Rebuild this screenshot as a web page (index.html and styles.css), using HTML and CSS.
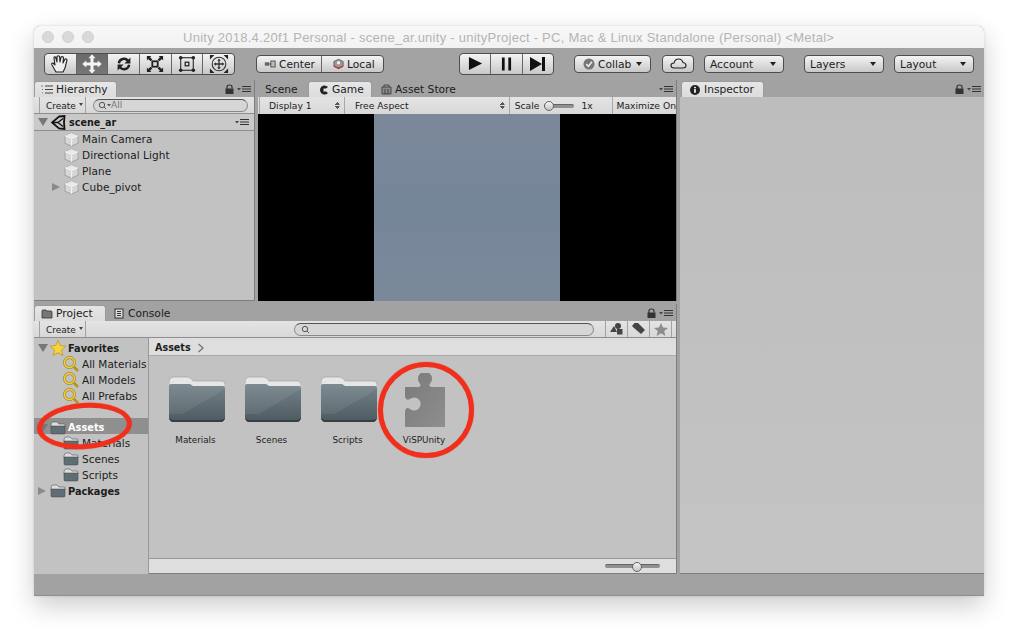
FILE: index.html
```html
<!DOCTYPE html>
<html lang="en">
<head>
<meta charset="utf-8">
<title>Unity</title>
<link rel="stylesheet" href="styles.css">
</head>
<body>
<svg class="defs" width="0" height="0" aria-hidden="true">
  <defs>
    <linearGradient id="fg" x1="0" y1="0" x2="0" y2="1"><stop offset="0" stop-color="#74838a"/><stop offset="1" stop-color="#4d5a60"/></linearGradient>
    <linearGradient id="pg" x1="0" y1="0" x2="1" y2="1"><stop offset="0" stop-color="#7a7a7a"/><stop offset="1" stop-color="#8e8e8e"/></linearGradient>
    <symbol id="folder" viewBox="0 0 56 46" preserveAspectRatio="none">
      <path d="M0 7Q0 1 5 1H18Q22 1 24 5H53Q56 5 56 9V13H0Z" fill="#e6e6e6" stroke="#9c9c9c" stroke-width=".6"/>
      <path d="M0 10Q0 8 2 8H21L24 10H54Q56 10 56 12V41Q56 46 51 46H5Q0 46 0 41Z" fill="url(#fg)"/>
      <path d="M0 10Q0 8 2 8H21L24 10H54Q56 10 56 12V13L14 38H0Z" fill="#fff" opacity=".07"/>
      <path d="M0 41Q0 46 5 46H51Q56 46 56 41V40Q56 44 51 44H5Q0 44 0 40Z" fill="#363f43"/>
    </symbol>
    <symbol id="mini" viewBox="0 0 16 14">
      <path d="M1 4Q1 1 3 1H7L9 3H14Q15 3 15 4V6H1Z" fill="#ddd" stroke="#555" stroke-width=".6"/>
      <path d="M1 5H15V12Q15 13 14 13H2Q1 13 1 12Z" fill="#5f6e74" stroke="#444" stroke-width=".5"/>
    </symbol>
    <symbol id="cube" viewBox="0 0 16 16">
      <path d="M8 1 15 4V12L8 15 1 12V4Z" fill="#d6d6d6" stroke="#a0a0a0"/>
      <path d="M8 1 15 4 8 7 1 4Z" fill="#e8e8e8"/>
      <path d="M1 4 8 7 15 4M8 7V15" fill="none" stroke="#f2f2f2"/>
    </symbol>
    <symbol id="mag" viewBox="0 0 16 16">
      <circle cx="6.500" cy="6.500" r="5" fill="none" stroke="#8f7a22" stroke-width="2.800"/>
      <circle cx="6.500" cy="6.500" r="5" fill="none" stroke="#eccb3c" stroke-width="1.800"/>
      <path d="M10.500 10.500 15 15" stroke="#b79520" stroke-width="2.600"/>
    </symbol>
    <symbol id="lock" viewBox="0 0 9 10">
      <rect x="0.5" y="4.5" width="8" height="5.5" fill="#333"/>
      <path d="M2 5V3Q2 1 4.500 1T7 3V4.500" fill="none" stroke="#333" stroke-width="1.200"/>
    </symbol>
    <symbol id="menu" viewBox="0 0 14 8">
      <path d="M0 3H4L2 5.500Z" fill="#444"/>
      <path d="M5 1.500H14M5 4H14M5 6.500H14" stroke="#333"/>
    </symbol>
  </defs>
</svg>

<div class="window">
  <header class="titlebar">
    <div class="lights"><i></i><i></i><i></i></div>
    <div class="title">Unity 2018.4.20f1 Personal - scene_ar.unity - unityProject - PC, Mac &amp; Linux Standalone (Personal) &lt;Metal&gt;</div>
  </header>

  <div class="toolbar">
    <div class="btn-group tools">
      <span class="tool"><svg width="22" height="20" viewBox="0 0 22 20"><path d="M7 18 3 11Q2 9 4 9L6 11 5 4Q5 2.500 6.500 3L8 8V2.500Q9.500 1 10.500 2.500L11 8 12 3Q13.500 2 14.500 3.500L14 9 16 5Q17.500 4.500 18 6L16 14 14 18Z" fill="#eee" stroke="#222" stroke-width="1.100" stroke-linejoin="round"/></svg></span>
      <span class="tool on"><svg width="20" height="20" viewBox="0 0 20 20"><path d="M10 0 14 4.500H11.800V8.200H15.500V6L20 10 15.500 14V11.800H11.800V15.500H14L10 20 6 15.500H8.200V11.800H4.500V14L0 10 4.500 6V8.200H8.200V4.500H6Z" fill="#f4f4f4" stroke="#555" stroke-width=".4"/></svg></span>
      <span class="tool"><svg width="16" height="16" viewBox="0 0 20 20"><path d="M3.500 9A6.500 6.500 0 0 1 15 6" fill="none" stroke="#222" stroke-width="3"/><path d="M18 2V9.500H10.500Z" fill="#222"/><path d="M16.500 11A6.500 6.500 0 0 1 5 14" fill="none" stroke="#222" stroke-width="3"/><path d="M2 18V10.500H9.500Z" fill="#222"/></svg></span>
      <span class="tool"><svg width="18" height="18" viewBox="0 0 20 20"><rect x="7" y="7" width="6" height="6" fill="none" stroke="#222" stroke-width="2"/><path d="M1 1H6L4.500 2.500 7 5 5 7 2.500 4.500 1 6ZM19 1V6L17.500 4.500 15 7 13 5 15.500 2.500 14 1ZM1 19V14L2.500 15.500 5 13 7 15 4.500 17.500 6 19ZM19 19H14L15.500 17.500 13 15 15 13 17.500 15.500 19 14Z" fill="#222"/></svg></span>
      <span class="tool"><svg width="18" height="18" viewBox="0 0 20 20"><rect x="3" y="3" width="14" height="14" fill="none" stroke="#333" stroke-width="1.300"/><circle cx="3" cy="3" r="2" fill="#222"/><circle cx="17" cy="3" r="2" fill="#222"/><circle cx="3" cy="17" r="2" fill="#222"/><circle cx="17" cy="17" r="2" fill="#222"/><rect x="8" y="8" width="4" height="4" fill="none" stroke="#222" stroke-width="1.400"/></svg></span>
      <span class="tool"><svg width="20" height="20" viewBox="0 0 22 22"><circle cx="11" cy="11" r="7.500" fill="none" stroke="#333" stroke-width="1.200"/><path d="M11 5 13 7.500H11.700V10.300H14.500V9L17 11 14.500 13V11.700H11.700V14.500H13L11 17 9 14.500H10.300V11.700H7.500V13L5 11 7.500 9V10.300H10.300V7.500H9Z" fill="#333"/><path d="M1 1H6L1 6ZM21 1V6L16 1ZM1 21V16L6 21ZM21 21H16L21 16Z" fill="#222"/></svg></span>
    </div>

    <div class="btn-group pivot">
      <span class="btn center"><svg width="12" height="10" viewBox="0 0 14 10"><rect x="1" y="3" width="5" height="4" fill="#666"/><rect x="8" y="1.500" width="5" height="7" fill="#bbb" stroke="#444"/><path d="M6 5H8" stroke="#c33" stroke-width="1.500"/></svg>Center</span>
      <span class="btn local"><svg width="11" height="12" viewBox="0 0 13 13"><path d="M6.500 1 12 3.500V9L6.500 12 1 9V3.500Z" fill="#999" stroke="#444" stroke-width=".8"/><path d="M1 9Q6.500 13.500 12 9" fill="none" stroke="#c8342c" stroke-width="1.500"/><circle cx="6.500" cy="5" r="2" fill="#eee"/></svg>Local</span>
    </div>

    <div class="btn-group play">
      <span class="tool"><svg width="15" height="15" viewBox="0 0 16 16"><path d="M1 1 15 8 1 15Z" fill="#111"/></svg></span>
      <span class="tool"><svg width="11" height="14" viewBox="0 0 12 14"><path d="M1 0H4V14H1ZM8 0H11V14H8Z" fill="#111"/></svg></span>
      <span class="tool"><svg width="15" height="14" viewBox="0 0 15 14"><path d="M0 0 12 7 0 14ZM12 0H15V14H12Z" fill="#111"/></svg></span>
    </div>

    <span class="btn drop collab"><svg width="12" height="12" viewBox="0 0 13 13"><circle cx="6.500" cy="6.500" r="6" fill="#777"/><path d="M3.500 6.500 5.800 9 9.800 4" fill="none" stroke="#eee" stroke-width="1.600"/></svg>Collab<b class="caret"></b></span>
    <span class="btn cloud"><svg width="17" height="11" viewBox="0 0 17 11"><path d="M4 10Q1 10 1 7.500T4 5Q5 1 8.500 1T13 4.500Q16 5 16 7.500T13 10Z" fill="none" stroke="#222" stroke-width="1.100"/></svg></span>
    <span class="btn drop account">Account<b class="caret"></b></span>
    <span class="btn drop layers">Layers<b class="caret"></b></span>
    <span class="btn drop layout">Layout<b class="caret"></b></span>
  </div>

  <div class="workspace">
    <div class="left-col">
      <div class="top-row">
        <section class="pane hierarchy">
          <div class="tabs">
            <span class="tab active"><svg width="12" height="9" viewBox="0 0 12 9"><path d="M4 1H12M4 4.500H12M4 8H12" stroke="#444"/><path d="M0 1H2M1 4.500H2M1 8H2" stroke="#777"/></svg>Hierarchy</span>
            <span class="tab-tools"><svg width="9" height="10"><use href="#lock"/></svg><svg width="14" height="8"><use href="#menu"/></svg></span>
          </div>
          <div class="subbar">
            <span class="create">Create<b class="caret small"></b></span>
            <span class="search short"><svg width="13" height="9" viewBox="0 0 13 9"><circle cx="4" cy="4" r="2.700" fill="none" stroke="#555"/><path d="M6 6 8 8" stroke="#555"/><path d="M9 3H13L11 5.500Z" fill="#555"/></svg>All</span>
          </div>
          <div class="scene-head">
            <b class="arrow down"></b>
            <svg width="15" height="15" viewBox="0 0 15 15"><path d="M8 1.500 13.500 1 13 7.500 13.500 14 8 13.500 1 7.500Z" fill="none" stroke="#111" stroke-width="1.800"/><path d="M7 7.500H2M7 7.500 12 3.500M7 7.500 12 11.500" stroke="#111" stroke-width="1.300"/></svg>
            <strong>scene_ar</strong>
            <svg class="end" width="14" height="8"><use href="#menu"/></svg>
          </div>
          <ul class="tree">
            <li><svg width="15" height="15"><use href="#cube"/></svg>Main Camera</li>
            <li><svg width="15" height="15"><use href="#cube"/></svg>Directional Light</li>
            <li><svg width="15" height="15"><use href="#cube"/></svg>Plane</li>
            <li><b class="arrow right"></b><svg width="15" height="15"><use href="#cube"/></svg>Cube_pivot</li>
          </ul>
        </section>

        <section class="pane game">
          <div class="tabs">
            <span class="tab plain scene-tab">Scene</span>
            <span class="tab active"><svg width="10" height="10" viewBox="0 0 10 10"><path d="M9 2Q7.500 .5 5.500 .5A4.500 4.500 0 0 0 5.500 9.500Q7.500 9.500 9 8L7 6.500H4.500V3.500H7Z" fill="#222"/></svg>Game</span>
            <span class="tab plain store-tab"><svg width="11" height="11" viewBox="0 0 11 11"><path d="M1 3H10V10H1Z" fill="#8a8a8a" stroke="#333" stroke-width=".8"/><path d="M3 3V1H8V3M4 5V10M7 5V10" fill="none" stroke="#333" stroke-width=".8"/></svg>Asset Store</span>
            <span class="tab-tools"><svg width="14" height="8"><use href="#menu"/></svg></span>
          </div>
          <div class="game-bar">
            <span class="cell display">Display 1<i class="updown"></i></span>
            <span class="cell aspect">Free Aspect<i class="updown"></i></span>
            <span class="cell scale">Scale<span class="slider small"><i></i></span>1x</span>
            <span class="cell maxon">Maximize On</span>
          </div>
          <div class="viewport"><div class="frame"></div></div>
        </section>
      </div>

      <section class="pane project">
        <div class="tabs">
          <span class="tab active"><svg width="12" height="10" viewBox="0 0 12 10"><path d="M1 9V2Q1 1 2 1H5L6 2H10Q11 2 11 3V9Z" fill="#777" stroke="#333" stroke-width=".8"/></svg>Project</span>
          <span class="tab plain console-tab"><svg width="10" height="11" viewBox="0 0 10 11"><rect x="1" y="1" width="8" height="9" fill="#ddd" stroke="#333"/><path d="M3 3.500H7M3 5.500H7M3 7.500H7" stroke="#333"/></svg>Console</span>
          <span class="tab-tools"><svg width="9" height="10"><use href="#lock"/></svg><svg width="14" height="8"><use href="#menu"/></svg></span>
        </div>
        <div class="subbar project-bar">
          <span class="create">Create<b class="caret small"></b></span>
          <span class="search long"><svg width="9" height="9" viewBox="0 0 9 9"><circle cx="4" cy="4" r="2.700" fill="none" stroke="#555"/><path d="M6 6 8 8" stroke="#555"/></svg></span>
          <span class="filter"><svg width="14" height="12" viewBox="0 0 14 12"><path d="M0 9 4 3 7 9Z" fill="#444"/><circle cx="8" cy="3" r="3" fill="#444"/><rect x="7" y="6" width="5.500" height="5.500" fill="#444"/></svg></span>
          <span class="filter"><svg width="14" height="12" viewBox="0 0 14 12"><path d="M0 3 2.500 0H6L13 7 9 11 2 5Z" fill="#444"/></svg></span>
          <span class="filter"><svg width="14" height="13" viewBox="0 0 14 13"><path d="M7 0 9 4.500 14 5 10.200 8 11.400 13 7 10.300 2.600 13 3.800 8 0 5 5 4.500Z" fill="#8c8c8c"/></svg></span>
          <span class="filter-end"></span>
        </div>
        <div class="project-body">
          <ul class="sidebar">
            <li class="root"><b class="arrow down"></b><svg width="16" height="16" viewBox="0 0 16 16"><path d="M8 .5 10.200 5.500 15.700 6.200 11.500 10 12.800 15.500 8 12.600 3.200 15.500 4.500 10 .3 6.200 5.800 5.500Z" fill="#f6d437" stroke="#b98f1c" stroke-width=".7"/></svg>Favorites</li>
            <li class="leaf"><svg width="16" height="16"><use href="#mag"/></svg>All Materials</li>
            <li class="leaf"><svg width="16" height="16"><use href="#mag"/></svg>All Models</li>
            <li class="leaf"><svg width="16" height="16"><use href="#mag"/></svg>All Prefabs</li>
            <li class="root selected"><b class="arrow down"></b><svg width="16" height="14"><use href="#mini"/></svg>Assets</li>
            <li class="leaf"><svg width="16" height="14"><use href="#mini"/></svg>Materials</li>
            <li class="leaf"><svg width="16" height="14"><use href="#mini"/></svg>Scenes</li>
            <li class="leaf"><svg width="16" height="14"><use href="#mini"/></svg>Scripts</li>
            <li class="root"><b class="arrow right"></b><svg width="16" height="14"><use href="#mini"/></svg>Packages</li>
          </ul>
          <div class="browser">
            <div class="crumbs"><strong>Assets</strong><svg width="8" height="10" viewBox="0 0 8 10"><path d="M1.500 1 6 5 1.500 9" fill="none" stroke="#777" stroke-width="1.400"/></svg></div>
            <div class="grid">
              <figure><svg width="56" height="46"><use href="#folder"/></svg><figcaption>Materials</figcaption></figure>
              <figure><svg width="56" height="46"><use href="#folder"/></svg><figcaption>Scenes</figcaption></figure>
              <figure><svg width="56" height="46"><use href="#folder"/></svg><figcaption>Scripts</figcaption></figure>
              <figure class="package"><svg width="56" height="58" viewBox="0 0 56 58"><path d="M8 14H22Q25 13 22.500 10A7 7 0 1 1 33.500 10Q31 13 34 14H48V54H8V38Q9 33.500 13 36A6.500 6.500 0 1 0 13 26Q9 28 8 24Z" fill="url(#pg)"/></svg><figcaption>ViSPUnity</figcaption></figure>
            </div>
            <div class="browser-foot"><span class="slider big"><i></i></span></div>
          </div>
        </div>
      </section>
    </div>

    <section class="pane inspector">
      <div class="tabs">
        <span class="tab active"><svg width="10" height="10" viewBox="0 0 11 11"><circle cx="5.500" cy="5.500" r="5.500" fill="#222"/><rect x="4.500" y="4.500" width="2" height="4" fill="#eee"/><rect x="4.500" y="2" width="2" height="1.600" fill="#eee"/></svg>Inspector</span>
        <span class="tab-tools"><svg width="9" height="10"><use href="#lock"/></svg><svg width="14" height="8"><use href="#menu"/></svg></span>
      </div>
      <div class="inspector-body"></div>
    </section>
  </div>

  <footer class="statusbar"></footer>

  <i class="ring ring-assets"></i>
  <i class="ring ring-plugin"></i>
</div>
</body>
</html>
```

FILE: styles.css
```css
* { box-sizing: border-box; }
html, body { margin: 0; height: 100%; }
body {
  background: #fff;
  padding: 26px 34px 0;
  font-family: "DejaVu Sans", sans-serif;
  font-size: 10.5px;
  color: #1c1c1c;
  overflow: hidden;
}
.defs { position: absolute; }
svg { flex: none; display: block; }
ul { list-style: none; margin: 0; padding: 0; }
figure { margin: 0; }

.window {
  position: relative;
  width: 950px;
  height: 570px;
  display: flex;
  flex-direction: column;
  border-radius: 6px 6px 2px 2px;
  background: #a2a2a2;
  box-shadow: 0 10px 26px rgba(0, 0, 0, .2), 0 0 3px rgba(0, 0, 0, .12);
}

.titlebar {
  height: 22px;
  flex: none;
  display: flex;
  align-items: center;
  background: linear-gradient(#f8f8f8, #f2f2f2);
  border-radius: 6px 6px 0 0;
}
.lights { display: flex; gap: 8px; padding-left: 8px; width: 149px; }
.lights i { width: 12px; height: 12px; border-radius: 50%; background: #d9d9d9; border: 1px solid #d0d0d0; }
.title {
  font: 13px "Liberation Sans", sans-serif;
  letter-spacing: .26px;
  color: #b4b4b4;
  white-space: nowrap;
}

.toolbar {
  height: 32px;
  flex: none;
  display: flex;
  align-items: center;
  background: #a3a3a3;
  padding-bottom: 1px;
  font-size: 10.7px;
}
.btn-group {
  display: flex;
  border: 1px solid #4e4e4e;
  border-radius: 4px;
  background: linear-gradient(#f4f4f4, #c8c8c8);
  overflow: hidden;
}
.tools { margin-left: 10px; height: 22px; width: 191px; }
.play { margin-left: 75px; height: 22px; width: 95px; }
.pivot { margin-left: 21px; height: 18px; width: 128px; }
.tool {
  flex: 1;
  display: flex;
  align-items: center;
  justify-content: center;
  border-left: 1px solid #666;
}
.tool:first-child { border-left: 0; }
.tool.on { background: linear-gradient(#6a6a6a, #767676); }
.btn {
  height: 18px;
  display: flex;
  align-items: center;
  gap: 3px;
  padding: 1px 5px 0;
}
.btn.center { width: 64px; height: 16px; padding-left: 7px; }
.btn.local { flex: 1; height: 16px; padding-left: 11px; border-left: 1px solid #666; }
.toolbar > .btn {
  border: 1px solid #4e4e4e;
  border-radius: 4px;
  background: linear-gradient(#f4f4f4, #c8c8c8);
}
.collab { width: 77px; margin-left: 20px; padding-left: 8px; padding-right: 6px; }
.cloud { width: 32px; margin-left: 11px; justify-content: center; padding: 0; }
.account { width: 80px; margin-left: 10px; }
.layers { width: 80px; margin-left: 20px; }
.layout { width: 80px; margin-left: 10px; }
.caret {
  margin-left: auto;
  margin-right: 2px;
  width: 0;
  height: 0;
  border: 3px solid transparent;
  border-top: 4px solid #222;
  border-bottom: 0;
}
.caret.small { border-width: 3px 2.5px 0; border-top-color: #444; margin: -4px 0 0 3px; }

.workspace { flex: 1; min-height: 0; display: flex; gap: 3px; background: #a2a2a2; }
.left-col { width: 643px; flex: none; display: flex; flex-direction: column; gap: 3px; }
.top-row { height: 221px; flex: none; display: flex; gap: 3px; }
.pane { display: flex; flex-direction: column; background: #c2c2c2; min-width: 0; }
.hierarchy { width: 221px; flex: none; border-right: 1px solid #7e7e7e; border-bottom: 1px solid #7e7e7e; }
.game { flex: 1; border-right: 1px solid #7e7e7e; }
.project { flex: 1; min-height: 0; border-right: 1px solid #7e7e7e; }
.inspector { flex: 1; }

.tabs {
  height: 17px;
  flex: none;
  display: flex;
  align-items: flex-end;
  background: #a2a2a2;
  font-size: 10.7px;
}
.tab {
  height: 16px;
  display: flex;
  align-items: center;
  gap: 3px;
  padding: 0 6px;
}
.tab.active {
  background: linear-gradient(#e6e6e6, #dcdcdc);
  border: 1px solid #9b9b9b;
  border-bottom: 0;
  border-radius: 3px 3px 0 0;
}
.hierarchy .tab.active { width: 83px; }
.game .tab.active { width: 64px; padding-left: 10px; }
.scene-tab { width: 50px; padding-left: 7px; }
.store-tab { padding-left: 9px; }
.console-tab { padding-left: 8px; gap: 4px; }
.tab-tools { margin-left: auto; height: 16px; display: flex; align-items: center; gap: 3px; padding-right: 3px; }
.project .tab.active { width: 72px; }
.inspector .tab.active { width: 83px; margin-left: 1px; padding-left: 8px; gap: 4px; }
.inspector-body { flex: 1; background: linear-gradient(#bdbdbd, #c4c4c4); border-bottom: 1px solid #7e7e7e; }

.subbar {
  height: 17px;
  flex: none;
  display: flex;
  align-items: center;
  background: linear-gradient(#e4e4e4, #d8d8d8);
  border-bottom: 1px solid #8e8e8e;
  font-size: 9px;
}
.create {
  height: 100%;
  display: flex;
  align-items: center;
  margin-left: 5px;
  padding: 2px 3px 0 6px;
  width: 47px;
  border-left: 1px solid #a2a2a2;
  border-right: 1px solid #a2a2a2;
}
.search {
  height: 13px;
  display: flex;
  align-items: center;
  padding-left: 4px;
  color: #777;
  background: #d6d6d6;
  border: 1px solid #888;
  border-top-color: #555;
  border-radius: 7px;
}
.search.short { width: 155px; margin-left: 7px; }
.search.long { width: 300px; margin-left: 208px; padding-left: 6px; }
.filter {
  width: 22px;
  height: 100%;
  display: flex;
  align-items: center;
  justify-content: center;
  border-left: 1px solid #a2a2a2;
}
.filter:nth-of-type(3) { margin-left: 11px; }
.filter-end { width: 1px; height: 100%; background: #a2a2a2; }

.scene-head {
  height: 17px;
  display: flex;
  align-items: center;
  gap: 3px;
  padding: 0 5px 0 4px;
  background: #c9c9c9;
  border-bottom: 1px solid #8e8e8e;
}
.scene-head strong { font-size: 9.6px; }
.end { margin-left: auto; }
.arrow { display: block; width: 0; height: 0; flex: none; }
.arrow.down { border-style: solid; border-width: 8px 5px 0; border-color: #777 transparent transparent; }
.arrow.right { border-style: solid; border-width: 4.5px 0 4.5px 8px; border-color: transparent transparent transparent #8a8a8a; }
.tree li {
  height: 16px;
  display: flex;
  align-items: center;
  gap: 3px;
  padding-left: 30px;
  letter-spacing: .08px;
}
.tree .arrow { margin-left: -12px; margin-right: 1px; }

.game-bar {
  height: 17px;
  flex: none;
  display: flex;
  background: linear-gradient(#e4e4e4, #d8d8d8);
  font-size: 9.2px;
}
.cell {
  display: flex;
  align-items: center;
  border-left: 1px solid #a8a8a8;
}
.display { margin-left: 1px; width: 85px; padding-left: 9px; }
.aspect { width: 165px; padding-left: 10px; }
.scale { width: 103px; padding-left: 5px; }
.maxon { flex: 1; padding-left: 4px; white-space: nowrap; }
.updown {
  margin-left: auto;
  margin-right: 4px;
  width: 5px;
  height: 9px;
  background:
    linear-gradient(135deg, transparent 50%, #555 50%) 0 0 / 2.5px 4px no-repeat,
    linear-gradient(225deg, transparent 50%, #555 50%) 2.5px 0 / 2.5px 4px no-repeat,
    linear-gradient(45deg, transparent 50%, #555 50%) 0 5px / 2.5px 4px no-repeat,
    linear-gradient(315deg, transparent 50%, #555 50%) 2.5px 5px / 2.5px 4px no-repeat;
}
.slider {
  display: flex;
  align-items: center;
  height: 4px;
  background: #909090;
  border-radius: 2px;
  border-top: 1px solid #666;
}
.slider i {
  display: block;
  height: 10px;
  width: 10px;
  border-radius: 50%;
  background: linear-gradient(#f4f4f4, #c4c4c4);
  border: 1px solid #666;
  flex: none;
}
.slider.small { width: 30px; margin: 0 7px 0 5px; }
.slider.big { width: 55px; }
.slider.big i { margin-left: 27px; }
.viewport { flex: 1; background: #000; display: flex; justify-content: center; }
.frame { width: 186px; background: linear-gradient(#7a8899, #76869a 50%, #7a8899); }

.project-body { flex: 1; min-height: 0; display: flex; }
.sidebar { width: 115px; flex: none; border-right: 1px solid #999; padding-top: 2px; }
.sidebar li {
  height: 16px;
  display: flex;
  align-items: center;
  white-space: nowrap;
}
.sidebar .root { padding-left: 4px; font-weight: 700; font-size: 9.8px; gap: 2px; }
.sidebar .leaf { padding-left: 29px; gap: 3px; }
.sidebar .selected {
  margin-top: 14px;
  height: 17px;
  padding-top: 2px;
  color: #fff;
  background: linear-gradient(#8f8f8f, #8f8f8f) 0 0 / 100% 16px no-repeat;
}
.sidebar .arrow.right { margin-right: 2px; }

.browser { flex: 1; min-width: 0; display: flex; flex-direction: column; }
.crumbs {
  height: 18px;
  flex: none;
  display: flex;
  align-items: center;
  gap: 6px;
  padding: 2px 0 0 6px;
  background: #dedede;
  border-bottom: 1px solid #aaa;
  font-size: 9.6px;
}
.grid {
  flex: 1;
  display: flex;
  align-items: flex-start;
  padding: 20px 0 0 20px;
  gap: 20px;
}
.grid figure { width: 56px; display: flex; flex-direction: column; align-items: center; }
.grid .package { margin-top: -3px; }
.grid figcaption { margin-top: 12px; padding-right: 3px; font-size: 8.8px; white-space: nowrap; line-height: 12px; }
.grid .package figcaption { margin-top: 3px; padding-right: 2px; }
.browser-foot {
  height: 16px;
  flex: none;
  display: flex;
  align-items: center;
  justify-content: flex-end;
  padding-right: 16px;
  background: #dedede;
  border-top: 1px solid #999;
  border-bottom: 1px solid #7e7e7e;
}

.statusbar { height: 22px; flex: none; background: #a2a2a2; border-bottom: 1px solid #8f8f8f; }

.ring { position: absolute; display: block; border: 5px solid #f02f1c; border-radius: 50%; box-shadow: 0 0 1px #f02f1c; }
.ring-assets { left: 3px; top: 377px; width: 95px; height: 46px; transform: rotate(-4deg); }
.ring-plugin { left: 344px; top: 336px; width: 96px; height: 96px; }
```
